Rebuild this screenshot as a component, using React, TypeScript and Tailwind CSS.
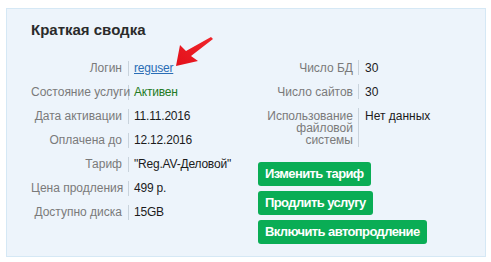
import React from 'react';

const leftRows = [
  { label: 'Логин', value: 'reguser', kind: 'link' },
  { label: 'Состояние услуги', value: 'Активен', kind: 'ok' },
  { label: 'Дата активации', value: '11.11.2016' },
  { label: 'Оплачена до', value: '12.12.2016' },
  { label: 'Тариф', value: '"Reg.AV-Деловой"' },
  { label: 'Цена продления', value: '499 р.' },
  { label: 'Доступно диска', value: '15GB' },
];

const rightRows = [
  { label: 'Число БД', value: '30' },
  { label: 'Число сайтов', value: '30' },
  { label: 'Использование файловой системы', value: 'Нет данных' },
];

const buttons = ['Изменить тариф', 'Продлить услугу', 'Включить автопродление'];

function Value({ value, kind }: { value: string; kind?: string }) {
  if (kind === 'link') {
    return <a href="#" className="text-[#2a6db5] underline">{value}</a>;
  }
  if (kind === 'ok') {
    return <span className="text-[#237a23]">{value}</span>;
  }
  return <span className="text-[#1b1b1b]">{value}</span>;
}

export default function App() {
  return (
    <div className="w-[491px] h-[262px] bg-white pt-[8px] pl-[6px] font-['Liberation_Sans',Arial,sans-serif]">
      <div className="relative w-[480px] h-[249px] bg-[#edf4fb] border border-[#d5e8f5] pl-[24px] pt-[13px]">
        <h2 className="text-[15px] leading-[15px] font-bold text-[#2b2b2b]">Краткая сводка</h2>

        <div className="mt-[24px] flex text-[12px]">
          {/* left table */}
          <div className="w-[227px] flex flex-col gap-[9px]">
            {leftRows.map((r) => (
              <div key={r.label} className="flex leading-[15px]">
                <div className="w-[98px] shrink-0 text-right pr-[6px] border-r border-[#c9d3dc] text-[#7a7a7a] whitespace-nowrap">
                  {r.label}
                </div>
                <div className="pl-[5px] whitespace-nowrap tracking-[-0.2px]">
                  <Value value={r.value} kind={r.kind} />
                </div>
              </div>
            ))}
          </div>

          {/* right column */}
          <div className="flex flex-col -mt-px">
            <div className="flex flex-col gap-[9px]">
              {rightRows.map((r) => (
                <div key={r.label} className="flex leading-[12px]">
                  <div className="w-[101px] shrink-0 text-right pr-[5px] py-[1.5px] border-r border-[#c9d3dc] text-[#7a7a7a]">
                    {r.label}
                  </div>
                  <div className="pl-[6px] py-[1.5px] whitespace-nowrap text-[#1b1b1b]">{r.value}</div>
                </div>
              ))}
            </div>
            <div className="mt-[15px] flex flex-col items-start gap-[5px]">
              {buttons.map((b) => (
                <button
                  key={b}
                  className="h-[24px] px-[7px] rounded-[3px] bg-[#0aad55] text-white text-[13px] font-bold leading-[24px] tracking-[-0.6px] whitespace-nowrap"
                >
                  {b}
                </button>
              ))}
            </div>
          </div>
        </div>

        {/* red pointer arrow */}
        <svg className="absolute left-[163px] top-[23px]" width="50" height="36" viewBox="0 0 50 36">
          <defs>
            <linearGradient id="ar" x1="1" y1="0" x2="0" y2="1">
              <stop offset="0" stopColor="#f0262c" />
              <stop offset="1" stopColor="#e3101a" />
            </linearGradient>
          </defs>
          <polygon
            points="6,34 10,13 16,19 41,5 43,7 21,24 28,29"
            fill="url(#ar)"
          />
        </svg>
      </div>
    </div>
  );
}
